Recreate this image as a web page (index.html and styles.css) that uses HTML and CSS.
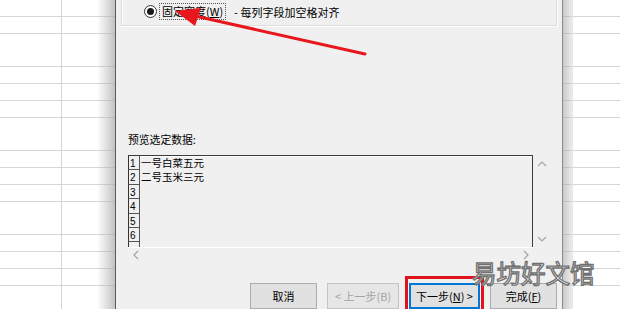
FILE: index.html
```html
<!DOCTYPE html>
<html lang="zh-CN">
<head>
<meta charset="utf-8">
<title>文本分列向导</title>
<link rel="stylesheet" href="styles.css">
</head>
<body>
<div class="screen">
  <div class="sheet sheet-left"><div class="shade-left"></div></div>
  <div class="dialog">
    <div class="group">
      <div class="option">
        <span class="radio"><span class="dot"></span></span>
        <span class="focus">固定宽度(<u>W</u>)</span>
        <span class="desc">- 每列字段加空格对齐</span>
      </div>
    </div>
    <div class="preview-label">预览选定数据:</div>
    <div class="preview">
      <div class="preview-main">
        <div class="rows">
          <div class="row"><span class="num">1</span><span class="txt">一号白菜五元</span></div>
          <div class="row"><span class="num">2</span><span class="txt">二号玉米三元</span></div>
          <div class="row"><span class="num">3</span><span class="txt"></span></div>
          <div class="row"><span class="num">4</span><span class="txt"></span></div>
          <div class="row"><span class="num">5</span><span class="txt"></span></div>
          <div class="row"><span class="num">6</span><span class="txt"></span></div>
          <div class="row"><span class="num"></span><span class="txt"></span></div>
        </div>
        <div class="vscroll">
          <svg width="10" height="6" viewBox="0 0 10 6"><path d="M1 5 L5 1 L9 5" fill="none" stroke="#a6a6a6" stroke-width="1.2"/></svg>
          <svg width="10" height="6" viewBox="0 0 10 6"><path d="M1 1 L5 5 L9 1" fill="none" stroke="#a6a6a6" stroke-width="1.2"/></svg>
        </div>
      </div>
      <div class="hscroll">
        <svg width="6" height="10" viewBox="0 0 6 10"><path d="M5 1 L1 5 L5 9" fill="none" stroke="#a6a6a6" stroke-width="1.2"/></svg>
        <svg width="6" height="10" viewBox="0 0 6 10"><path d="M1 1 L5 5 L1 9" fill="none" stroke="#a6a6a6" stroke-width="1.2"/></svg>
      </div>
    </div>
    <div class="buttons">
      <div class="btn btn-cancel">取消</div>
      <div class="btn btn-back disabled">&lt; 上一步(B)</div>
      <div class="btn btn-next default">下一步(<u>N</u>) &gt;<span class="mark"></span></div>
      <div class="btn btn-finish">完成(<u>F</u>)</div>
    </div>
  </div>
  <div class="sheet sheet-right"><div class="shade-right"></div></div>
  <svg class="arrow" width="620" height="309" viewBox="0 0 620 309">
    <line x1="365" y1="54" x2="195" y2="16" stroke="#e8161d" stroke-width="3" stroke-linecap="round"/>
    <polygon points="175,11 201,8 195,26" fill="#e8161d"/>
  </svg>
  <div class="watermark">易坊好文馆</div>
</div>
</body>
</html>
```

FILE: styles.css
```css
* { box-sizing: border-box; }
html, body { margin: 0; padding: 0; }
body {
  width: 620px;
  height: 309px;
  overflow: hidden;
  font-family: "Noto Sans CJK SC", "Liberation Sans", sans-serif;
  font-size: 11px;
  color: #000;
  background: #fff;
}
.screen {
  position: relative;
  width: 620px;
  height: 309px;
  display: flex;
  overflow: hidden;
}
.sheet {
  position: relative;
  height: 309px;
  background-color: #fff;
  background-image: repeating-linear-gradient(to bottom, transparent 0, transparent 16px, #d6d6d6 16px, #d6d6d6 16.8px);
}
.sheet-left {
  width: 115px;
  background-image:
    linear-gradient(to right, transparent 61px, #d6d6d6 61px, #d6d6d6 62px, transparent 62px),
    repeating-linear-gradient(to bottom, transparent 0, transparent 16px, #d6d6d6 16px, #d6d6d6 16.8px);
}
.shade-left {
  position: absolute;
  right: 0;
  top: 0;
  bottom: 0;
  width: 18px;
  background: linear-gradient(to right, rgba(200,200,200,0), rgba(170,170,170,0.7));
}
.sheet-right {
  width: 58px;
  border-left: 1px solid #8a8a8a;
}
.shade-right {
  position: absolute;
  left: 0;
  top: 0;
  bottom: 0;
  width: 10px;
  background: linear-gradient(to right, rgba(160,160,160,0.55), rgba(200,200,200,0.35));
  border-right: 1px solid #e6e6e6;
}
.dialog {
  width: 447px;
  height: 309px;
  background: #f0f0f0;
  border-left: 1px solid #5a5a5a;
  display: flex;
  flex-direction: column;
}
.group {
  margin-left: 5px;
  width: 436px;
  height: 26px;
  border: 1px solid #dcdcdc;
  border-top: none;
  box-shadow: inset 1px 0 0 #fff, 1px 1px 0 #fff;
  padding-left: 22px;
  padding-top: 3px;
}
.option {
  display: flex;
  align-items: center;
  height: 17px;
}
.radio {
  width: 13px;
  height: 13px;
  border: 1px solid #333;
  border-radius: 50%;
  background: #fff;
  display: flex;
  align-items: center;
  justify-content: center;
  margin-right: 2px;
}
.dot {
  width: 7px;
  height: 7px;
  border-radius: 50%;
  background: #1a1a1a;
}
.focus {
  height: 17px;
  line-height: 15px;
  padding: 0 2px;
  border: 1px dotted #555;
  white-space: nowrap;
}
.desc {
  margin-left: 8px;
  white-space: nowrap;
}
.preview-label {
  margin-top: 106px;
  margin-left: 12px;
  height: 14px;
  line-height: 14px;
  font-size: 10.8px;
}
.preview {
  margin-top: 9px;
  margin-left: 12px;
  width: 422px;
}
.preview-main {
  display: flex;
  height: 92px;
}
.rows {
  width: 405px;
  height: 92px;
  border-top: 1px solid #3c3c3c;
  border-right: 1px solid #3c3c3c;
  overflow: hidden;
  box-shadow: inset 0 1px 0 #fff;
}
.row {
  display: flex;
  height: 14.4px;
}
.num {
  width: 12px;
  height: 14.4px;
  border-left: 1px solid #333;
  border-right: 1px solid #555;
  border-bottom: 1px solid #555;
  font-family: "Liberation Sans", sans-serif;
  font-size: 10px;
  line-height: 16px;
  padding-left: 1px;
  background: #f0f0f0;
}
.txt {
  font-size: 10.5px;
  line-height: 14px;
  padding-left: 1px;
  white-space: nowrap;
}
.vscroll {
  width: 17px;
  height: 92px;
  display: flex;
  flex-direction: column;
  justify-content: space-between;
  align-items: center;
  padding: 6px 0 5px 0;
}
.hscroll {
  width: 405px;
  height: 15px;
  border-top: 1px solid #fff;
  display: flex;
  justify-content: space-between;
  align-items: center;
  padding: 0 4px 0 5px;
}
.buttons {
  margin-top: 21px;
  margin-left: 134px;
  display: flex;
  gap: 10px;
}
.btn {
  position: relative;
  height: 26px;
  line-height: 24px;
  text-align: center;
  background: #e1e1e1;
  border: 1px solid #adadad;
  white-space: nowrap;
}
.btn u { text-underline-offset: 1px; }
.btn-cancel { width: 67px; }
.btn-back { width: 72px; }
.btn-next { width: 71px; }
.btn-finish { width: 67px; }
.disabled {
  color: #a3a3a3;
  border-color: #c4c4c4;
  background: #e6e6e6;
}
.default {
  border: 2px solid #0078d7;
  line-height: 22px;
}
.mark {
  position: absolute;
  left: -6px;
  right: -6px;
  top: -9px;
  bottom: -12px;
  border: 3px solid #e0141c;
}
.arrow {
  position: absolute;
  left: 0;
  top: 0;
  pointer-events: none;
}
.watermark {
  position: absolute;
  left: 472px;
  top: 257px;
  font-family: "Noto Sans CJK SC", sans-serif;
  font-size: 24.5px;
  line-height: 32px;
  color: #fff;
  -webkit-text-stroke: 1.3px #707070;
  white-space: nowrap;
}
```
